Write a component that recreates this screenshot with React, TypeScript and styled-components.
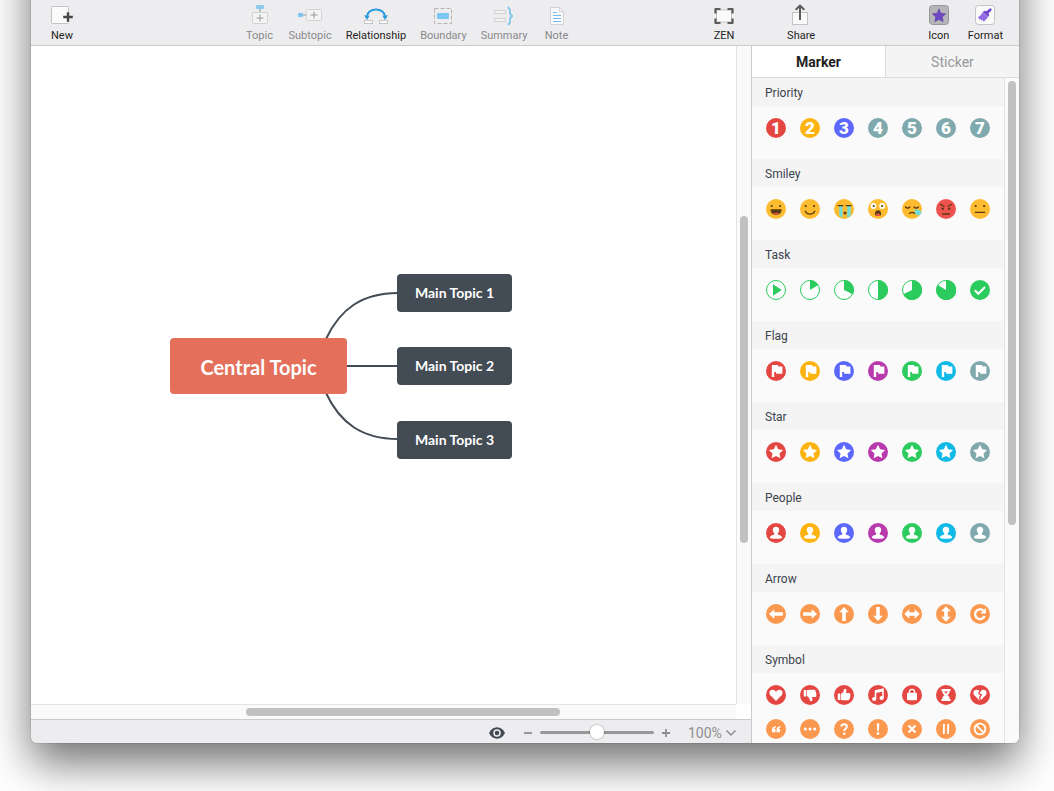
import React, { useState } from "react";
import styled, { createGlobalStyle, css } from "styled-components";

const GlobalStyle = createGlobalStyle`
  * { box-sizing: border-box; }
  body { margin: 0; background: #fff; overflow: hidden; }
  button, input, select { font: inherit; color: inherit; margin: 0; padding: 0; border: 0; background: none; }
  button { cursor: pointer; }
  svg { display: block; }
`;

const color = {
  red: "#e44642",
  yellow: "#fdb30f",
  blue: "#5b68fb",
  purple: "#b93aad",
  green: "#2bcb5d",
  cyan: "#10b9e6",
  teal: "#80a9ae",
  orange: "#fb9850",
  slate: "#434b54",
  coral: "#e4705c",
  face: "#fdbb2f",
  ink: "#5a3a12",
  tear: "#6fdcd8",
};

/* ---------- Window shell ---------- */

const Page = styled.div`
  display: flex;
  height: 100vh;
  padding: 0 35px 48px 31px;
  overflow: hidden;
  font-family: Roboto, "Liberation Sans", sans-serif;
  color: #1f1f21;
`;

const AppWindow = styled.div`
  flex: 1;
  min-width: 0;
  display: flex;
  flex-direction: column;
  margin-top: -80px;
  border-radius: 6px;
  background: #fff;
  box-shadow: 0 0 1px rgba(0, 0, 0, 0.7), 0 20px 44px rgba(0, 0, 0, 0.56);
`;

const Toolbar = styled.header`
  display: flex;
  align-items: flex-end;
  height: 126px;
  flex: none;
  padding: 0 16px 2px;
  border-bottom: 1px solid #cbcbcc;
  background: #ededef;
`;

const ToolGroup = styled.div<{ $gap?: number }>`
  display: flex;
  gap: ${(p) => p.$gap ?? 14}px;
`;

const Spring = styled.div<{ $grow: number }>`
  flex: ${(p) => p.$grow} 1 0;
`;

const ToolButton = styled.button<{ $dim?: boolean }>`
  display: flex;
  flex-direction: column;
  align-items: center;
  min-width: 30px;
  font-size: 11px;
  line-height: 14px;
  white-space: nowrap;
  color: ${(p) => (p.$dim ? "#89898c" : "#1f1f21")};
  svg { margin-bottom: 2px; }
`;

const Body = styled.div`
  flex: 1;
  min-height: 0;
  display: flex;
`;

/* ---------- Editor ---------- */

const Editor = styled.main`
  flex: 1;
  min-width: 0;
  display: flex;
  flex-direction: column;
`;

const CanvasRow = styled.div`
  flex: 1;
  min-height: 0;
  display: flex;
`;

const Canvas = styled.div`
  flex: 1;
  position: relative;
  overflow: hidden;
`;

const Links = styled.svg`
  position: absolute;
  left: 0;
  top: 0;
`;

const Topic = styled.div<{ $x: number; $y: number; $central?: boolean }>`
  position: absolute;
  left: ${(p) => p.$x}px;
  top: ${(p) => p.$y}px;
  display: flex;
  align-items: center;
  justify-content: center;
  border-radius: 4px;
  color: #fff;
  font-family: Lato, "Open Sans", sans-serif;
  font-weight: 700;
  white-space: nowrap;
  ${(p) =>
    p.$central
      ? css`width: 177px; height: 56px; padding-top: 1px; font-size: 20px; background: ${color.coral};`
      : css`width: 115px; height: 38px; padding-bottom: 2px; font-size: 14px; background: ${color.slate};`}
`;

const Gutter = styled.div<{ $across?: boolean; $before: number; $after: number }>`
  flex: none;
  display: flex;
  flex-direction: ${(p) => (p.$across ? "row" : "column")};
  background: #fafafa;
  ${(p) =>
    p.$across
      ? css`height: 15px; margin-right: 15px; padding: 3px 0; border-top: 1px solid #e4e4e4;`
      : css`width: 15px; padding: 0 3px; border-left: 1px solid #e4e4e4;`}
  &::before { content: ""; flex: ${(p) => p.$before} 1 0; }
  &::after { content: ""; flex: ${(p) => p.$after} 1 0; }
`;

const Thumb = styled.div<{ $size: number }>`
  flex: ${(p) => p.$size} 1 0;
  border-radius: 4px;
  background: #c1c1c1;
`;

const StatusBar = styled.footer`
  flex: none;
  display: flex;
  align-items: center;
  justify-content: flex-end;
  height: 24px;
  padding: 2px 14px 0 0;
  border-top: 1px solid #cbcbcc;
  border-bottom-left-radius: 6px;
  background: #ededef;
  color: #8e8e91;
`;

const EyeButton = styled.button`
  margin-right: 19px;
`;

const ZoomRange = styled.input`
  appearance: none;
  width: 114px;
  height: 16px;
  margin: 0 8px;
  background: transparent;
  &::-webkit-slider-runnable-track {
    height: 3px;
    border-radius: 2px;
    background: #98989b;
  }
  &::-webkit-slider-thumb {
    appearance: none;
    width: 14px;
    height: 14px;
    margin-top: -6px;
    border-radius: 50%;
    background: #fff;
    box-shadow: 0 0 1px 1px rgba(0, 0, 0, 0.14);
  }
`;

const ZoomLevel = styled.label`
  display: flex;
  align-items: center;
  gap: 3px;
  margin-left: 18px;
  select {
    appearance: none;
    width: 34px;
    font-size: 14px;
    line-height: 16px;
  }
`;

/* ---------- Marker panel ---------- */

const Panel = styled.aside`
  flex: none;
  width: 268px;
  display: flex;
  flex-direction: column;
  overflow: hidden;
  border-left: 1px solid #cbcbcc;
  border-bottom-right-radius: 6px;
  background: #fafafa;
`;

const Tabs = styled.div`
  flex: none;
  display: flex;
  height: 32px;
  border-bottom: 1px solid #dcdcdc;
`;

const Tab = styled.button<{ $active?: boolean }>`
  flex: 1;
  font-size: 14px;
  font-weight: ${(p) => (p.$active ? 700 : 400)};
  color: ${(p) => (p.$active ? "#1f1f21" : "#98989b")};
  background: ${(p) => (p.$active ? "#fff" : "#f4f4f4")};
  & + & { border-left: 1px solid #dcdcdc; }
`;

const PanelScroll = styled.div`
  flex: 1;
  min-height: 0;
  display: flex;
`;

const Sections = styled.div`
  flex: 1;
  overflow: hidden;
`;

const SectionTitle = styled.h2`
  margin: 0;
  padding: 2px 0 0 13px;
  font-size: 12px;
  font-weight: 400;
  line-height: 26px;
  color: #3b434c;
  background: #f4f4f4;
`;

const MarkerGrid = styled.div`
  display: grid;
  grid-template-columns: repeat(7, 20px);
  gap: 14px;
  padding: 12px 14px 21px;
`;

const Marker = styled.button`
  width: 20px;
  height: 20px;
  border-radius: 50%;
`;

const NumberMarker = styled(Marker)<{ $fill: string }>`
  background: ${(p) => p.$fill};
  color: #fff;
  font-size: 17px;
  font-weight: 900;
  line-height: 20px;
`;

/* ---------- Marker drawings ---------- */

const Disc = ({ fill, children }: { fill: string; children?: React.ReactNode }) => (
  <svg width="20" height="20" viewBox="0 0 20 20" fill="#fff">
    <circle cx="10" cy="10" r="10" fill={fill} />
    {children}
  </svg>
);

const Eyes = ({ y = 7 }: { y?: number }) => (
  <g fill={color.ink}>
    <circle cx="5.7" cy={y} r="1.1" />
    <circle cx="14.1" cy={y} r="1.1" />
  </g>
);

const stroke = { fill: "none", stroke: color.ink, strokeWidth: 1.3, strokeLinecap: "round" as const };

const smileys: [string, React.ReactNode][] = [
  ["Laugh", <Disc fill={color.face}><Eyes /><path d="M4.6 10.2h11c0 3.6-2.300 5.700-5.500 5.700s-5.500-2.100-5.500-5.700z" fill={color.ink} /><path d="M7 14.600c1.500-1.200 4.700-1.200 6.200 0-1.600 1.500-4.600 1.500-6.200 0z" fill="#ee5048" /></Disc>],
  ["Smile", <Disc fill={color.face}><Eyes /><path d="M5.300 12.200c2 3.800 7.400 3.800 9.400 0" {...stroke} /></Disc>],
  ["Cry", <Disc fill={color.face}><path d="M5.200 7h3.300v11.700l-3.300-1.600zM13.200 7h3.500v10l-3.500 1.800z" fill={color.tear} /><path d="M4.200 6.600h4.600M12.200 6.600h5" {...stroke} /><circle cx="11" cy="14" r="1.500" fill={color.ink} /></Disc>],
  ["Surprise", <Disc fill={color.face}><circle cx="5.500" cy="7" r="2.900" /><circle cx="14.200" cy="7" r="2.900" /><Eyes /><path d="M7 14.300c0-4 6-4 6 0v1.500c0 1.500-6 1.500-6 0z" fill={color.ink} /><ellipse cx="10" cy="15.700" rx="2" ry="1.300" fill="#ee5048" /></Disc>],
  ["Sleepy", <Disc fill={color.face}><path d="M3.500 8c1.200 1.400 3.300 1.400 4.300 0M12 8c1.200 1.400 3.300 1.400 4.300 0M7.500 14.400c1.500-1.500 3.800-1.500 5 0" {...stroke} /><path d="M12.300 10.600c3.200-.5 7 .2 7 2.900 0 3-4.500 4-6 .9-.5-1-.6-2.300-1-3.800z" fill={color.tear} /></Disc>],
  ["Angry", <Disc fill="#ef5350"><path d="M4.300 5.300l3.700 2M15.700 5.300l-3.700 2M6.500 15h7" {...stroke} /><circle cx="6.800" cy="9.700" r="1.200" fill={color.ink} /><circle cx="13.200" cy="9.700" r="1.200" fill={color.ink} /></Disc>],
  ["Neutral", <Disc fill={color.face}><Eyes /><path d="M5.300 13.300h9.400" {...stroke} /></Disc>],
];

const Ring = ({ children }: { children: React.ReactNode }) => (
  <svg width="20" height="20" viewBox="0 0 20 20" fill={color.green}>
    <circle cx="10" cy="10" r="9.500" fill="#fff" stroke={color.green} />
    {children}
  </svg>
);

const tasks: [string, React.ReactNode][] = [
  ["Start", <Ring><path d="M7 4.300v11.400l8.800-5.700z" /></Ring>],
  ["One eighth", <Ring><path d="M10 10V0a10 10 0 0 1 8.300 5z" /></Ring>],
  ["One third", <Ring><path d="M10 10V0a10 10 0 0 1 8.900 14.300z" /></Ring>],
  ["Half", <Ring><path d="M10 0a10 10 0 0 1 0 20z" /></Ring>],
  ["Two thirds", <Ring><path d="M10 10V0a10 10 0 1 1-8.900 14.300z" /></Ring>],
  ["Seven eighths", <Ring><path d="M10 10V0a10 10 0 1 1-8.300 5z" /></Ring>],
  ["Done", <Disc fill={color.green}><path d="M4.800 10.300l3.500 3.500 6.700-6.800" fill="none" stroke="#fff" strokeWidth="2.200" /></Disc>],
];

const palette = [color.red, color.yellow, color.blue, color.purple, color.green, color.cyan, color.teal];
const paletteNames = ["Red", "Yellow", "Blue", "Purple", "Green", "Cyan", "Gray"];

const tinted = (shape: React.ReactNode): [string, React.ReactNode][] =>
  palette.map((fill, i) => [paletteNames[i], <Disc fill={fill}>{shape}</Disc>]);

const flagShape = <path d="M5.800 3.900h5.700c.5 0 .8.300.8.800v.8h4.100v7.200h-5.600c-.5 0-.8-.3-.8-.8v-.8H8.200v5H5.800z" />;
const starShape = <path d="M10 2.800l2.200 4.500 4.900.7-3.600 3.400.9 4.900L10 14l-4.400 2.300.9-4.900L2.900 8l4.900-.7z" />;
const personShape = (
  <path d="M10 3.700c2.200 0 3.300 1.500 3.200 3.400-.1 1.700-.8 2.700-1.500 3.400v1.100c1.800.500 4.400 1.200 4.600 3.100 0 .5-2.400 1-6.300 1s-6.300-.5-6.300-1c.2-1.900 2.800-2.600 4.600-3.100v-1.100C7.600 9.800 6.900 8.800 6.800 7.100c-.1-1.900 1-3.400 3.200-3.400z" />
);

const leftArrow = "M2.900 10l5.400-4.800v3h8.600v3.600H8.300v3z";
const doubleArrow = "M2.300 10l5-4.800v3h5.400v-3l5 4.800-5 4.800v-3H7.300v3z";
const arrows: [string, React.ReactNode][] = [
  ["Left", <Disc fill={color.orange}><path d={leftArrow} /></Disc>],
  ["Right", <Disc fill={color.orange}><path d={leftArrow} transform="rotate(180 10 10)" /></Disc>],
  ["Up", <Disc fill={color.orange}><path d={leftArrow} transform="rotate(90 10 10)" /></Disc>],
  ["Down", <Disc fill={color.orange}><path d={leftArrow} transform="rotate(270 10 10)" /></Disc>],
  ["Left and right", <Disc fill={color.orange}><path d={doubleArrow} /></Disc>],
  ["Up and down", <Disc fill={color.orange}><path d={doubleArrow} transform="rotate(90 10 10)" /></Disc>],
  ["Refresh", <Disc fill={color.orange}><path d="M13.400 6.700a4.900 4.900 0 1 0 1.200 5.200" fill="none" stroke="#fff" strokeWidth="2.400" /><path d="M15.900 4v5.500h-5.500z" /></Disc>],
];

const heart = "M10 16L4.300 10.200C2.600 8.300 3.400 5 6.200 4.800c1.600-.1 2.900.7 3.800 2 .9-1.300 2.200-2.100 3.800-2 2.800.2 3.600 3.500 1.900 5.400z";
const thumb = (
  <>
    <rect x="3.700" y="8.500" width="2.600" height="6.500" rx=".5" />
    <path d="M6.900 9c1.600-1 2.800-2.700 3.100-4.600.2-1 2.100-.9 2.400.5.200 1.100-.1 2.200-.5 3.200h3.300c1.300 0 1.500 1.300.9 1.900.6.600.5 1.500-.2 1.900.4.700.2 1.400-.5 1.700.3 1-.3 1.700-1.200 1.700H9.500c-1 0-1.800-.3-2.600-.6z" />
  </>
);

const reds: [string, React.ReactNode][] = [
  ["Heart", <Disc fill={color.red}><path d={heart} /></Disc>],
  ["Thumb down", <Disc fill={color.red}><g transform="translate(0 20) scale(1 -1)">{thumb}</g></Disc>],
  ["Thumb up", <Disc fill={color.red}>{thumb}</Disc>],
  ["Music", <Disc fill={color.red}><path d="M7.500 14V5.800l7.500-1.600V13M7.500 7.300L15 5.700" fill="none" stroke="#fff" strokeWidth="1.500" /><circle cx="6.200" cy="14" r="2.100" /><circle cx="13.600" cy="13" r="2.100" /></Disc>],
  ["Lock", <Disc fill={color.red}><path d="M7.500 8.500V6.600c0-3 5-3 5 0v1.900" fill="none" stroke="#fff" strokeWidth="1.400" /><rect x="5" y="7.800" width="10" height="7.500" rx="1" /></Disc>],
  ["Hourglass", <Disc fill={color.red}><path d="M5.500 4h9v1.900h-.8c0 2-1 3.300-2.300 4.100 1.300.8 2.300 2.100 2.300 4.100h.8V16h-9v-1.900h.8c0-2 1-3.300 2.300-4.100-1.300-.8-2.300-2.100-2.300-4.100h-.8z" /><path d="M8 6.600h4L10 8.700z" fill={color.red} /></Disc>],
  ["Broken heart", <Disc fill={color.red}><path d={heart} /><path d="M10.300 5.500l-1.500 3 2.600 1.500-1.900 2.300 1 3.700" fill="none" stroke={color.red} strokeWidth="1.300" /></Disc>],
];

const quoteMark = "M9.800 7C7.500 7.200 6 8.800 6 11v2.300h3.500V9.900H8.200c.2-.8.7-1.300 1.600-1.500z";

const oranges: [string, React.ReactNode][] = [
  ["Quote", <Disc fill={color.orange}><path d={quoteMark} /><path d={quoteMark} transform="translate(4.500 0)" /></Disc>],
  ["More", <Disc fill={color.orange}><circle cx="5.300" cy="10" r="1.500" /><circle cx="10" cy="10" r="1.500" /><circle cx="14.700" cy="10" r="1.500" /></Disc>],
  ["Question", <Disc fill={color.orange}><path d="M7.300 7.600c.1-3.200 5.600-3.200 5.600 0 0 2.100-2.700 2.100-2.700 4.500" fill="none" stroke="#fff" strokeWidth="2" /><circle cx="10.200" cy="14.800" r="1.300" /></Disc>],
  ["Exclamation", <Disc fill={color.orange}><path d="M8.800 4.300h2.500l-.4 7.700H9.200z" /><circle cx="10" cy="14.600" r="1.400" /></Disc>],
  ["Cross", <Disc fill={color.orange}><path d="M6.500 6.500l7 7M13.500 6.500l-7 7" stroke="#fff" strokeWidth="2.200" /></Disc>],
  ["Pause", <Disc fill={color.orange}><rect x="7" y="5" width="1.800" height="10" /><rect x="11.200" y="5" width="1.800" height="10" /></Disc>],
  ["Forbidden", <Disc fill={color.orange}><g fill="none" stroke="#fff" strokeWidth="1.800"><circle cx="10" cy="10" r="5.400" /><path d="M6.200 6.200l7.600 7.600" /></g></Disc>],
];

const sections: { title: string; items: [string, React.ReactNode][] }[] = [
  { title: "Smiley", items: smileys },
  { title: "Task", items: tasks },
  { title: "Flag", items: tinted(flagShape) },
  { title: "Star", items: tinted(starShape) },
  { title: "People", items: tinted(personShape) },
  { title: "Arrow", items: arrows },
  { title: "Symbol", items: [...reds, ...oranges] },
];

const priorityFills = [color.red, color.yellow, color.blue, color.teal, color.teal, color.teal, color.teal];

/* ---------- Toolbar drawings ---------- */

const Glyph = ({ children }: { children: React.ReactNode }) => (
  <svg width="26" height="24" viewBox="0 0 26 24" fill="none">{children}</svg>
);

const paper = { fill: "#fafafa", stroke: "#c4c4c6", strokeWidth: 1 };
const faint = { fill: "#f4f4f5", stroke: "#d2d2d4", strokeWidth: 1 };

const NewIcon = () => (
  <Glyph>
    <rect x="2.500" y="3.500" width="17" height="17" rx="1" {...paper} />
    <path d="M19 9.200v9.600M14.200 14h9.600" stroke="#48484a" strokeWidth="2.400" />
  </Glyph>
);
const TopicIcon = () => (
  <Glyph>
    <rect x="9" y="2" width="8" height="4" rx="1" fill="#8ecaec" />
    <path d="M13 6v4" stroke="#8fa9b8" strokeWidth="1.300" />
    <rect x="5.500" y="9.500" width="15" height="11" rx="1" {...faint} />
    <path d="M13 11.500v7M9.500 15h7" stroke="#98989a" />
  </Glyph>
);
const SubtopicIcon = () => (
  <Glyph>
    <rect x="1" y="10" width="5" height="4" rx="1" fill="#7cc4ee" />
    <path d="M6 12h4" stroke="#a9b4bb" strokeWidth="1.300" />
    <rect x="9.500" y="6.500" width="15" height="11" rx="1" {...faint} />
    <path d="M17 8.500v7M13.500 12h7" stroke="#98989a" />
  </Glyph>
);
const RelationshipIcon = () => (
  <Glyph>
    <path d="M4 13.500C5 4 21 4 22 13.500" stroke="#2c9be0" strokeWidth="2" />
    <path d="M1 12.300l5.600.4-2.600 4.300zM25 12.300l-5.600.4 2.600 4.300z" fill="#2c9be0" />
    <rect x="1.500" y="17.500" width="8" height="3" {...paper} />
    <rect x="16.500" y="17.500" width="8" height="3" {...paper} />
  </Glyph>
);
const BoundaryIcon = () => (
  <Glyph>
    <rect x="4.500" y="5.500" width="17" height="15" stroke="#b4b4b7" strokeDasharray="4 2" />
    <rect x="7" y="10" width="12" height="6" rx="1" fill="#7cc6f3" />
  </Glyph>
);
const SummaryIcon = () => (
  <Glyph>
    <rect x="3.500" y="7.500" width="11" height="3" {...faint} />
    <rect x="3.500" y="15.500" width="11" height="3" {...faint} />
    <path d="M16.500 4.500c2 0 2.500 1 2.500 4 0 3 .5 4.500 3 4.500-2.500 0-3 1.500-3 4.500 0 3-.5 4-2.500 4" stroke="#83c5ee" strokeWidth="1.800" />
  </Glyph>
);
const NoteIcon = () => (
  <Glyph>
    <path d="M6.500 4.500h9l4 4v13h-13z" {...faint} fill="#fafafa" />
    <path d="M15.500 4.500v4h4" stroke="#d2d2d4" />
    <path d="M9 9.500h4M9 12.500h8M9 15.500h8M9 18.500h8" stroke="#74bdec" />
  </Glyph>
);
const ZenIcon = () => (
  <Glyph>
    <rect x="5.500" y="7" width="15" height="12" {...paper} />
    <path d="M4.500 10.500V6h5M16.500 6h5v4.500M21.500 15.500V20h-5M9.500 20h-5v-4.500" stroke="#5c5c5e" strokeWidth="2.200" strokeLinejoin="round" />
  </Glyph>
);
const ShareIcon = () => (
  <Glyph>
    <rect x="4.500" y="9.500" width="15" height="12" {...paper} />
    <path d="M12 17V3M7.700 6.800L12 2.600l4.300 4.200" stroke="#5c5c5e" strokeWidth="2" />
  </Glyph>
);
const IconIcon = () => (
  <Glyph>
    <rect x="3.500" y="2.500" width="19" height="19" rx="3" fill="#b6b6b8" stroke="#98989b" />
    <path d="M13 5.800l2 4.400 4.800.5-3.500 3.300.9 4.700L13 16.400l-4.200 2.300.9-4.700-3.500-3.300 4.800-.5z" fill="#6d48c2" stroke="#5a3aa8" strokeWidth=".5" />
  </Glyph>
);
const FormatIcon = () => (
  <Glyph>
    <rect x="3.500" y="2.500" width="19" height="19" rx="3" fill="#fafafa" stroke="#c4c4c6" />
    <path d="M18.200 5.300c1.400.1 1.900 1.300 1.100 2.300l-2.700 2.800.6 2-1.200 1.600-5.300-5 1.500-1.300 2 .6z" fill="#7248cc" />
    <path d="M10.600 9.300l5.400 5c-1.800 2.200-3.300 3.600-4.600 4.500l-1-2-1 1-.8-1.900-1.200.5-1.400-2.300c2-.7 3.400-2.600 4.600-4.800z" fill="#936ae2" />
  </Glyph>
);

type Tool = { label: string; icon: React.ReactNode; dim?: boolean };

const tools: Tool[] = [
  { label: "Topic", icon: <TopicIcon />, dim: true },
  { label: "Subtopic", icon: <SubtopicIcon />, dim: true },
  { label: "Relationship", icon: <RelationshipIcon /> },
  { label: "Boundary", icon: <BoundaryIcon />, dim: true },
  { label: "Summary", icon: <SummaryIcon />, dim: true },
  { label: "Note", icon: <NoteIcon />, dim: true },
];

const renderTool = (t: Tool) => (
  <ToolButton key={t.label} $dim={t.dim} disabled={t.dim}>
    {t.icon}
    {t.label}
  </ToolButton>
);

export default function App() {
  const [zoom, setZoom] = useState(50);
  return (
    <Page>
      <GlobalStyle />
      <AppWindow>
        <Toolbar>
          {renderTool({ label: "New", icon: <NewIcon /> })}
          <Spring $grow={168} />
          <ToolGroup>{tools.map(renderTool)}</ToolGroup>
          <Spring $grow={138} />
          <ToolGroup $gap={47}>
            {renderTool({ label: "ZEN", icon: <ZenIcon /> })}
            {renderTool({ label: "Share", icon: <ShareIcon /> })}
          </ToolGroup>
          <Spring $grow={108} />
          <ToolGroup>
            {renderTool({ label: "Icon", icon: <IconIcon /> })}
            {renderTool({ label: "Format", icon: <FormatIcon /> })}
          </ToolGroup>
        </Toolbar>
        <Body>
          <Editor>
            <CanvasRow>
              <Canvas>
                <Links width="500" height="500" fill="none" stroke={color.slate} strokeWidth="2">
                  <path d="M295 293C309 263 331 247 367 247" />
                  <path d="M315 320H367" />
                  <path d="M295 347C309 377 331 393 367 393" />
                </Links>
                <Topic $x={139} $y={292} $central>Central Topic</Topic>
                <Topic $x={366} $y={228}>Main Topic 1</Topic>
                <Topic $x={366} $y={301}>Main Topic 2</Topic>
                <Topic $x={366} $y={375}>Main Topic 3</Topic>
              </Canvas>
              <Gutter $before={170} $after={161}><Thumb $size={327} /></Gutter>
            </CanvasRow>
            <Gutter $across $before={215} $after={176}><Thumb $size={314} /></Gutter>
            <StatusBar>
              <EyeButton aria-label="Show or hide">
                <svg width="16" height="12" viewBox="0 0 16 12">
                  <path d="M0 6c1.800-3.600 4.600-5.700 8-5.700S14.200 2.400 16 6c-1.800 3.600-4.600 5.700-8 5.700S1.800 9.600 0 6z" fill={color.slate} />
                  <circle cx="8" cy="6" r="3" fill="none" stroke="#ededef" strokeWidth="1.500" />
                </svg>
              </EyeButton>
              <button aria-label="Zoom out">
                <svg width="8" height="8" viewBox="0 0 8 8"><path d="M0 4h8" stroke="#8e8e91" strokeWidth="1.800" /></svg>
              </button>
              <ZoomRange
                type="range"
                aria-label="Zoom"
                value={zoom}
                onChange={(e) => setZoom(Number(e.target.value))}
              />
              <button aria-label="Zoom in">
                <svg width="8" height="8" viewBox="0 0 8 8"><path d="M0 4h8M4 0v8" stroke="#8e8e91" strokeWidth="1.800" /></svg>
              </button>
              <ZoomLevel>
                <select aria-label="Zoom level" defaultValue="100%">
                  <option>50%</option>
                  <option>100%</option>
                  <option>200%</option>
                </select>
                <svg width="12" height="8" viewBox="0 0 12 8" fill="none"><path d="M1.500 1.500L6 6l4.500-4.500" stroke="#8e8e91" strokeWidth="1.500" /></svg>
              </ZoomLevel>
            </StatusBar>
          </Editor>
          <Panel>
            <Tabs role="tablist">
              <Tab role="tab" aria-selected="true" $active>Marker</Tab>
              <Tab role="tab" aria-selected="false">Sticker</Tab>
            </Tabs>
            <PanelScroll>
              <Sections>
                <SectionTitle>Priority</SectionTitle>
                <MarkerGrid>
                  {priorityFills.map((fill, i) => (
                    <NumberMarker key={i} $fill={fill}>{i + 1}</NumberMarker>
                  ))}
                </MarkerGrid>
                {sections.map((s) => (
                  <React.Fragment key={s.title}>
                    <SectionTitle>{s.title}</SectionTitle>
                    <MarkerGrid>
                      {s.items.map(([name, drawing]) => (
                        <Marker key={name} aria-label={`${name} ${s.title}`}>{drawing}</Marker>
                      ))}
                    </MarkerGrid>
                  </React.Fragment>
                ))}
              </Sections>
              <Gutter $before={3} $after={218}><Thumb $size={444} /></Gutter>
            </PanelScroll>
          </Panel>
        </Body>
      </AppWindow>
    </Page>
  );
}
